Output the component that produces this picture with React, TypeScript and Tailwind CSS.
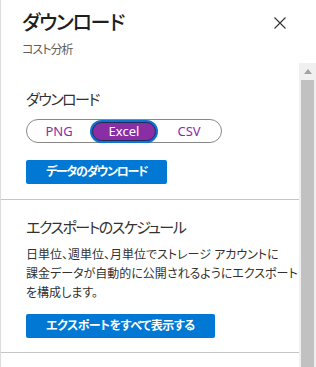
import React from 'react';

const formats = ['PNG', 'Excel', 'CSV'];

const FormatToggle = ({ selected }: { selected: string }) => (
  <div className="flex w-[196px] h-[24px] items-center rounded-full border border-[#8a8886] px-[1px]">
    {formats.map((f) =>
      f === selected ? (
        <div key={f} className="flex-1 h-[19px] flex items-center justify-center rounded-full bg-[#8a2ea6] border border-[#1f2a5c] ring-2 ring-[#0f73cf] text-white text-[13px] leading-none mx-[2px]">
          {f}
        </div>
      ) : (
        <div key={f} className="flex-1 flex items-center justify-center text-[#8a2ea6] text-[13px] leading-none">
          {f}
        </div>
      )
    )}
  </div>
);

const PrimaryButton = ({ children, tight }: { children: React.ReactNode; tight?: boolean }) => (
  <button
    className={`h-[24px] px-[20px] bg-[#0078d4] rounded-[2px] text-white text-[12px] font-semibold leading-none ${tight ? 'tracking-[-1.3px]' : 'tracking-[-0.5px]'}`}
  >
    {children}
  </button>
);

export default function App() {
  return (
    <div className="w-[316px] h-[367px] overflow-hidden bg-white flex flex-col border-l border-[#dcdcdc] text-[#323130] font-['Noto_Sans','Noto_Sans_CJK_JP',sans-serif] [font-feature-settings:'palt']">
      <header className="flex justify-between items-start h-[63px] pl-[21px] pr-[30px] pt-[9px]">
        <div>
          <h1 className="text-[20px] leading-[28px] font-medium tracking-[-1.2px] text-[#201f1e]">ダウンロード</h1>
          <p className="text-[12px] leading-[16px] mt-[5px] tracking-[-1px] text-[#605e5c]">コスト分析</p>
        </div>
        <button className="mt-[8px] text-[#323130]">
          <svg width="12" height="12" viewBox="0 0 12 12" fill="none" stroke="currentColor" strokeWidth="1.1">
            <path d="M0.5 0.5 L11.5 11.5 M11.5 0.5 L0.5 11.5" />
          </svg>
        </button>
      </header>

      <div className="flex flex-1 min-h-0">
        <div className="flex-1 min-w-0">
          <section className="pl-[25px] pt-[25px] pb-[15px] border-b border-[#c8c6c4]">
            <h2 className="text-[15px] leading-[22px] tracking-[-1.5px] mb-[9px]">ダウンロード</h2>
            <FormatToggle selected="Excel" />
            <div className="mt-[15px]">
              <PrimaryButton tight>データのダウンロード</PrimaryButton>
            </div>
          </section>

          <section className="pl-[25px] pt-[16px] pr-[8px] pb-[14px] border-b border-[#c8c6c4]">
            <h2 className="text-[15px] leading-[22px] tracking-[-1.5px] mb-[7px]">エクスポートのスケジュール</h2>
            <p className="text-[12px] leading-[19px] text-[#323130] whitespace-nowrap">
              日単位、週単位、月単位でストレージ アカウントに
              <br />
              課金データが自動的に公開されるようにエクスポート
              <br />
              を構成します。
            </p>
            <div className="mt-[10px]">
              <PrimaryButton>エクスポートをすべて表示する</PrimaryButton>
            </div>
          </section>
        </div>

        <div className="w-[17px] bg-[#f0f0f0] flex flex-col items-center">
          <div className="h-[17px] flex items-center justify-center">
            <svg width="8" height="5" viewBox="0 0 8 5">
              <path d="M0 5 L4 0 L8 5 Z" fill="#a3a3a3" />
            </svg>
          </div>
          <div className="w-[13px] flex-1 bg-[#c1c1c1]" />
        </div>
      </div>
    </div>
  );
}
